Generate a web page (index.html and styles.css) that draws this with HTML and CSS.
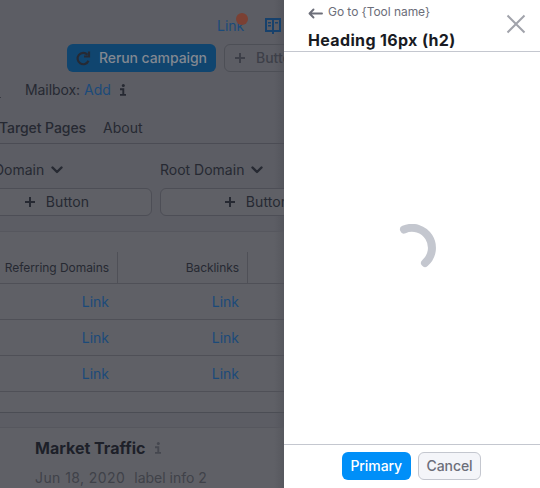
FILE: index.html
```html
<!DOCTYPE html>
<html lang="en">
<head>
<meta charset="utf-8">
<title>Campaign</title>
<link rel="stylesheet" href="styles.css">
</head>
<body>
<svg width="0" height="0" class="defs">
  <symbol id="plus" viewBox="0 0 10 10"><path d="M5 0v10M0 5h10" fill="none" stroke="currentColor" stroke-width="2"/></symbol>
  <symbol id="chevron" viewBox="0 0 12 8"><path d="M1.500 1.500 6 6l4.500-4.500" fill="none" stroke="currentColor" stroke-width="2.400" stroke-linecap="round" stroke-linejoin="round"/></symbol>
  <symbol id="info" viewBox="0 0 8 12"><circle cx="4.300" cy="1.500" r="1.500" fill="currentColor"/><path d="M1 5.300h3.300v5.200M1 10.900h6" fill="none" stroke="currentColor" stroke-width="1.900"/></symbol>
</svg>
<div class="app">
  <main class="page">
    <div class="toplinks">
      <a class="link">Link<span class="dot"></span></a>
      <svg class="book" viewBox="0 0 16 16" fill="none" stroke="currentColor"><path stroke-width="2" d="M1 1h14v12H1zM8 1v15"/><path stroke-width="1.500" d="M3 4.800H6M3 7.800H6M10 4.800h3"/></svg>
    </div>
    <div class="actions">
      <div class="rerun"><svg viewBox="0 0 15 15"><path d="M12.500 9.800A5.700 5.700 0 1 1 11.500 3.700" fill="none" stroke="currentColor" stroke-width="2.200"/><path d="M13 .500v5H8" fill="none" stroke="currentColor" stroke-width="2.200"/></svg><span>Rerun campaign</span></div>
      <div class="ghost"><svg class="plus"><use href="#plus"/></svg><span>Button</span></div>
    </div>
    <div class="mailbox"><i class="mark"></i><span>Mailbox:</span><a>Add</a><svg class="info"><use href="#info"/></svg></div>
    <nav class="tabs"><span class="active">Target Pages</span><span class="about">About</span></nav>
    <div class="filters">
      <div class="filter first"><div class="label"><span>Domain</span><svg class="chev"><use href="#chevron"/></svg></div><div class="button"><svg class="plus"><use href="#plus"/></svg><span>Button</span></div></div>
      <div class="filter"><div class="label"><span>Root Domain</span><svg class="chev"><use href="#chevron"/></svg></div><div class="button"><svg class="plus"><use href="#plus"/></svg><span>Button</span></div></div>
    </div>
    <section class="card">
      <div class="row head"><div>Referring Domains</div><div>Backlinks</div><b></b></div>
      <div class="row"><a>Link</a><a>Link</a></div>
      <div class="row"><a>Link</a><a>Link</a></div>
      <div class="row"><a>Link</a><a>Link</a></div>
    </section>
    <section class="market">
      <h3><span>Market Traffic</span><svg class="info"><use href="#info"/></svg></h3>
      <p><span class="date">Jun 18, 2020</span><span>label info 2</span></p>
    </section>
  </main>
  <aside class="drawer">
    <header>
      <div>
        <a class="back"><svg viewBox="0 0 15 11"><path d="M1.500 5.500H14M5.500 1.500l-4 4 4 4" fill="none" stroke="currentColor" stroke-width="1.900" stroke-linecap="round" stroke-linejoin="round"/></svg><span>Go to {Tool name}</span></a>
        <h2>Heading 16px (h2)</h2>
      </div>
      <svg class="close" viewBox="0 0 20 20"><path d="m1.500 1.500 17 17m0-17-17 17" stroke="currentColor" stroke-width="2"/></svg>
    </header>
    <div class="body"><svg class="spinner" viewBox="0 0 48 48"><path d="M16 5.500A20 20 0 0 1 37 39" fill="none" stroke="#c4c7cf" stroke-width="8" stroke-linecap="round"/></svg></div>
    <footer><div class="primary">Primary</div><div class="cancel">Cancel</div></footer>
  </aside>
</div>
</body>
</html>
```
FILE: styles.css
```css
* { box-sizing: border-box; }
body { margin: 0; overflow: hidden; font: 14px/20px Inter, sans-serif; }
.defs { position: absolute; }
svg { display: block; flex: none; }
h2, h3, p { margin: 0; }
span { white-space: nowrap; }
.app { display: flex; width: 540px; height: 488px; }
.page { width: 284px; overflow: hidden; background: linear-gradient(90deg, transparent 274px, rgba(25, 27, 35, .12)), #5c5d64; color: #262932; }
.page a { color: #1b4a7a; }
.toplinks { display: flex; height: 44px; padding: 16px 0 0 217px; gap: 21px; }
.link { position: relative; width: 27px; }
.dot { position: absolute; left: 19px; top: -3px; width: 12px; height: 12px; border-radius: 50%; background: #7b4033; }
.book { width: 16px; height: 16px; margin-top: 2px; color: #17416c; }
.actions { display: flex; gap: 8px; height: 28px; padding-left: 67px; }
.rerun { display: flex; flex: none; align-items: center; width: 149px; padding-left: 9px; gap: 8px; border-radius: 6px; background: #10456f; color: #828891; font-weight: 500; letter-spacing: -.08px; }
.rerun svg { width: 15px; height: 15px; color: #262a34; }
.ghost { display: flex; flex: none; align-items: center; width: 92px; padding-left: 10px; gap: 11px; border: 1px solid #4d4f56; border-radius: 6px; color: #3d3f48; font-weight: 500; }
.plus { width: 10px; height: 10px; }
.mailbox { display: flex; align-items: center; height: 36px; gap: 4px; letter-spacing: -.07px; }
.mark { width: 1px; height: 1px; margin: 14px 20px 0 0; background: #383a42; }
.info { width: 8px; height: 12px; margin-left: 4px; }
.tabs { display: flex; height: 36px; padding-top: 10px; border-bottom: 1px solid #4b4c54; gap: 17px; }
.active { width: 86px; margin-left: -1px; font-weight: 500; letter-spacing: -.07px; }
.about { margin-left: 1px; }
.filters { display: flex; gap: 8px; height: 87px; padding-top: 16px; }
.filter { flex: none; width: 200px; }
.first { margin-left: -48px; }
.label { display: flex; align-items: center; gap: 7px; height: 20px; }
.first .label { padding-left: 42px; }
.chev { width: 12px; height: 8px; }
.button { display: flex; align-items: center; justify-content: center; gap: 11px; height: 28px; margin-top: 8px; padding-right: 6px; border: 1px solid #4d4e56; border-radius: 6px; background: #5f6066; letter-spacing: .1px; }
.first .button { padding: 0 0 0 10px; }
.card { height: 182px; border-top: 1px solid #56575e; border-bottom: 1px solid #4b4d54; background: linear-gradient(90deg, transparent 274px, rgba(25, 27, 35, .12)), #5f6066; }
.row { display: grid; grid-template-columns: 118px 130px 1fr; align-items: center; height: 36px; border-bottom: 1px solid #4f5057; text-align: right; }
.row > * { padding-right: 9px; }
.head { height: 52px; padding-top: 20px; font-size: 12px; letter-spacing: -.06px; }
.head > div { height: 31px; padding-top: 6px; padding-right: 8px; border-right: 1px solid #4f5057; }
.market { height: 61px; margin-top: 14px; padding: 10px 0 0 35px; border-top: 1px solid #56575e; background: linear-gradient(90deg, transparent 274px, rgba(25, 27, 35, .12)), #5f6066; }
h3 { display: flex; align-items: center; gap: 4px; font-size: 16px; line-height: 20px; font-weight: 700; color: #1d2029; }
h3 .info { margin-left: 5px; color: #45474f; }
.market p { display: flex; gap: 9px; margin-top: 10px; color: #404249; }
.date { letter-spacing: .42px; }
.drawer { display: flex; flex-direction: column; width: 256px; background: #fff; color: #191b23; }
header { display: flex; justify-content: space-between; height: 52px; padding: 4px 14px 0 24px; border-bottom: 1px solid #c4c7cf; }
.back { display: flex; align-items: center; gap: 5px; height: 16px; color: #6c6e79; font-size: 12px; line-height: 16px; letter-spacing: -.05px; }
.back svg { width: 15px; height: 11px; margin-top: 3px; }
h2 { margin-top: 8px; font-size: 16px; line-height: 24px; font-weight: 700; letter-spacing: .35px; }
.close { width: 20px; height: 20px; margin-top: 10px; color: #a1a3ab; }
.body { flex: 1; display: flex; align-items: center; justify-content: center; }
.spinner { width: 48px; height: 48px; }
footer { display: flex; gap: 8px; height: 44px; padding: 7px 0 0 58px; border-top: 1px solid #c4c7cf; }
.primary, .cancel { display: flex; align-items: center; justify-content: center; height: 28px; border-radius: 6px; font-weight: 500; letter-spacing: -.07px; }
.primary { width: 68.500px; background: #008ff8; color: #fff; }
.cancel { width: 63px; margin-left: -.5px; border: 1px solid #c4c7cf; background: #f4f5f9; color: #6c6e79; }
```
